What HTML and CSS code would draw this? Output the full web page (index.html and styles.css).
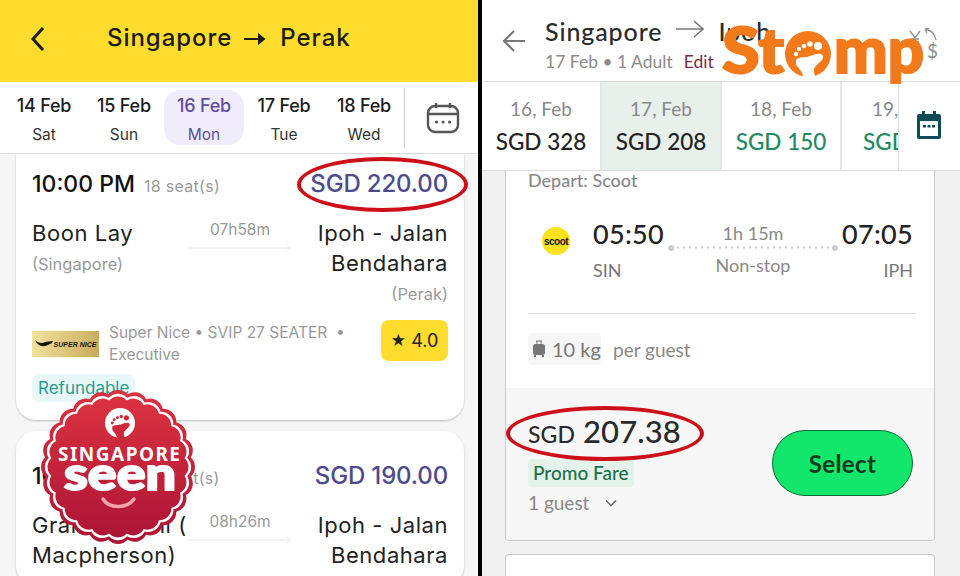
FILE: index.html
```html
<!DOCTYPE html>
<html lang="en">
<head>
<meta charset="utf-8">
<title>Singapore to Perak fares</title>
<link rel="stylesheet" href="styles.css">
</head>
<body>
<main class="page">
  <section class="left">
    <header class="l-head">
      <svg class="l-back" width="16" height="26" viewBox="0 0 16 26"><path d="M13 2 3 13l10 11" fill="none" stroke="#1d1a10" stroke-width="3"/></svg>
      <h1 class="l-title">Singapore<svg class="l-arrow" width="22" height="12" viewBox="0 0 22 12"><path d="M0 6h19M15 2l5 4-5 4z" fill="#1d1a10" stroke="#1d1a10" stroke-width="2"/></svg>Perak</h1>
    </header>
    <nav class="l-dates">
      <div class="l-day"><b>14 Feb</b><span>Sat</span></div>
      <div class="l-day"><b>15 Feb</b><span>Sun</span></div>
      <div class="l-day is-on"><b>16 Feb</b><span>Mon</span></div>
      <div class="l-day"><b>17 Feb</b><span>Tue</span></div>
      <div class="l-day"><b>18 Feb</b><span>Wed</span></div>
      <div class="l-cal">
        <svg width="34" height="34" viewBox="0 0 34 34" fill="none" stroke="#555" stroke-width="2.4"><rect x="2" y="5" width="30" height="26" rx="7"/><path d="M2 13h30M10 2v5M24 2v5"/><path d="M10.500 21h.1M17 21h.1M23.500 21h.1" stroke-width="3" stroke-linecap="round"/></svg>
      </div>
    </nav>
    <div class="l-list">
      <article class="l-card l-card-first">
        <div class="l-top">
          <div><span class="l-time">10:00 PM</span><span class="l-seats">18 seat(s)</span></div>
          <span class="l-price">SGD 220.00</span>
        </div>
        <div class="l-route">
          <div><p class="l-place">Boon Lay</p><p class="l-sub">(Singapore)</p></div>
          <div class="l-mid"><span>07h58m</span><svg width="104" height="8" viewBox="0 0 104 8" fill="none" stroke="#e8e8e8"><path d="M0 4h103M99 1l4 3-4 3"/></svg></div>
          <div class="l-end"><p class="l-place">Ipoh - Jalan Bendahara</p><p class="l-sub">(Perak)</p></div>
        </div>
        <div class="l-op">
          <div class="l-logo"><svg width="18" height="10" viewBox="0 0 18 10"><path d="M0 1c3 7 9 8 17 3l1-2-8 1C7 5 3 4 0 1z" fill="#1a1508"/></svg><i>SUPER NICE</i></div>
          <p class="l-optext">Super Nice • SVIP 27 SEATER &nbsp;• Executive</p>
          <div class="l-rate"><small>★</small> 4.0</div>
        </div>
        <span class="l-chip">Refundable</span>
      </article>
      <article class="l-card">
        <div class="l-top">
          <div><span class="l-time">10:30 PM</span><span class="l-seats">18 seat(s)</span></div>
          <span class="l-price">SGD 190.00</span>
        </div>
        <div class="l-route">
          <div><p class="l-place">Grantral Mall ( Macpherson)</p></div>
          <div class="l-mid"><span>08h26m</span><svg width="104" height="8" viewBox="0 0 104 8" fill="none" stroke="#e8e8e8"><path d="M0 4h103M99 1l4 3-4 3"/></svg></div>
          <div class="l-end"><p class="l-place">Ipoh - Jalan Bendahara</p></div>
        </div>
      </article>
    </div>
  </section>

  <section class="right">
    <header class="r-head">
      <svg width="24" height="22" viewBox="0 0 24 22" fill="none" stroke="#777" stroke-width="2.200"><path d="M23 11H2M12 1 2 11l10 10"/></svg>
      <div class="r-titles">
        <h2 class="r-title">Singapore<svg width="28" height="18" viewBox="0 0 28 18" fill="none" stroke="#777" stroke-width="1.600"><path d="M0 9h26M18 1l9 8-9 8"/></svg>Ipoh</h2>
        <p class="r-meta">17 Feb • 1 Adult<em>Edit</em></p>
      </div>
      <svg class="r-fx" width="30" height="36" viewBox="0 0 30 36" fill="none" stroke="#8a8f96" stroke-width="1.300"><path d="M2 3l5 7 5-7M7 10v6M3 11h8M3 14h8M17 1c6 1 10 5 11 11M17 1l4-1M17 1l2 4"/><text class="r-fx-t" x="19" y="30">$</text></svg>
    </header>
    <nav class="r-dates">
      <div class="r-day"><span>16, Feb</span><b>SGD 328</b></div>
      <div class="r-day is-on"><span>17, Feb</span><b>SGD 208</b></div>
      <div class="r-day is-low"><span>18, Feb</span><b>SGD 150</b></div>
      <div class="r-day is-low is-cut"><span>19, Feb</span><b>SGD 150</b></div>
      <div class="r-cal">
        <svg width="26" height="28" viewBox="0 0 26 28"><path d="M1 5a2 2 0 0 1 2-2h3V0h3v3h8V0h3v3h3a2 2 0 0 1 2 2v21a2 2 0 0 1-2 2H3a2 2 0 0 1-2-2z" fill="#0f4a58"/><rect x="4" y="10" width="18" height="15" fill="#fff"/><path d="M7 14h3v2.500H7zM11.500 14h3v2.500h-3zM16 14h3v2.500h-3z" fill="#0f4a58"/></svg>
      </div>
    </nav>
    <div class="r-list">
      <article class="r-card">
        <div class="r-main">
          <p class="r-carrier">Depart: Scoot</p>
          <div class="r-flight">
            <div class="r-scoot"><span>scoot</span></div>
            <div class="r-leg"><b>05:50</b><span>SIN</span></div>
            <div class="r-stop">
              <span>1h 15m</span>
              <i class="r-dots"></i>
              <span>Non-stop</span>
            </div>
            <div class="r-leg r-leg-end"><b>07:05</b><span>IPH</span></div>
          </div>
          <div class="r-bag">
            <span class="r-kg"><svg width="14" height="18" viewBox="0 0 14 18"><path d="M4 1h6M5 1v3M9 1v3" stroke="#777" fill="none"/><rect x="1" y="4" width="12" height="11" rx="2.500" fill="#777"/><path d="M3 15v2M11 15v2" stroke="#777" stroke-width="2"/></svg>10 kg</span>
            <span>per guest</span>
          </div>
        </div>
        <div class="r-foot">
          <div>
            <p class="r-price"><small>SGD</small> 207.38</p>
            <span class="r-promo">Promo Fare</span>
            <p class="r-guest">1 guest<svg width="12" height="8" viewBox="0 0 12 8" fill="none" stroke="#666" stroke-width="1.500"><path d="M1 1.500l5 5 5-5"/></svg></p>
          </div>
          <button class="r-select" type="button">Select</button>
        </div>
      </article>
      <article class="r-card r-next"></article>
    </div>
  </section>

  <div class="ring ring-left"></div>
  <div class="ring ring-right"></div>

  <svg class="stomp" width="206" height="62" viewBox="0 0 206 62">
    <text class="stomp-t" x="0" y="51" textLength="62" lengthAdjust="spacingAndGlyphs">St</text>
    <circle cx="86" cy="32" r="23" fill="#f37a1b"/>
    <g fill="#fff">
      <path d="M74 38C77 34 84 36 88 34 93 32 99 30 101 34 102 38 96 41 93 45 91 48 92 52 94 56L81 56C81 48 75 46 74 42Z"/>
      <circle cx="96" cy="24" r="4"/><circle cx="88" cy="22" r="2.700"/><circle cx="82" cy="24" r="2.300"/><circle cx="77" cy="27" r="2.200"/><circle cx="74" cy="32" r="2.200"/>
    </g>
    <text class="stomp-t" x="112" y="51" textLength="90" lengthAdjust="spacingAndGlyphs">mp</text>
  </svg>

  <svg class="badge" width="160" height="160" viewBox="-80 -80 160 160">
    <defs>
      <linearGradient id="red" x1="0" y1="0" x2="0" y2="1"><stop offset="0" stop-color="#dc3340"/><stop offset="1" stop-color="#ac1436"/></linearGradient>
      <clipPath id="wave">
        <circle r="66"/>
        <circle cy="-64" r="13"/><circle cy="-64" r="13" transform="rotate(15)"/><circle cy="-64" r="13" transform="rotate(30)"/><circle cy="-64" r="13" transform="rotate(45)"/><circle cy="-64" r="13" transform="rotate(60)"/><circle cy="-64" r="13" transform="rotate(75)"/><circle cy="-64" r="13" transform="rotate(90)"/><circle cy="-64" r="13" transform="rotate(105)"/><circle cy="-64" r="13" transform="rotate(120)"/><circle cy="-64" r="13" transform="rotate(135)"/><circle cy="-64" r="13" transform="rotate(150)"/><circle cy="-64" r="13" transform="rotate(165)"/><circle cy="-64" r="13" transform="rotate(180)"/><circle cy="-64" r="13" transform="rotate(195)"/><circle cy="-64" r="13" transform="rotate(210)"/><circle cy="-64" r="13" transform="rotate(225)"/><circle cy="-64" r="13" transform="rotate(240)"/><circle cy="-64" r="13" transform="rotate(255)"/><circle cy="-64" r="13" transform="rotate(270)"/><circle cy="-64" r="13" transform="rotate(285)"/><circle cy="-64" r="13" transform="rotate(300)"/><circle cy="-64" r="13" transform="rotate(315)"/><circle cy="-64" r="13" transform="rotate(330)"/><circle cy="-64" r="13" transform="rotate(345)"/>
      </clipPath>
    </defs>
    <rect x="-80" y="-80" width="160" height="160" fill="url(#red)" clip-path="url(#wave)"/>
    <g transform="scale(.95)"><rect x="-80" y="-80" width="160" height="160" fill="#fff" clip-path="url(#wave)"/></g>
    <g transform="scale(.915)"><rect x="-80" y="-80" width="160" height="160" fill="url(#red)" clip-path="url(#wave)"/></g>
    <circle cx="2" cy="-44" r="15" fill="#fff"/>
    <g transform="translate(2 -44) scale(.644) translate(-86 -32)" fill="#cf2a3b">
      <path d="M74 38C77 34 84 36 88 34 93 32 99 30 101 34 102 38 96 41 93 45 91 48 92 52 94 56L81 56C81 48 75 46 74 42Z"/>
      <circle cx="96" cy="24" r="4"/><circle cx="88" cy="22" r="2.700"/><circle cx="82" cy="24" r="2.300"/><circle cx="77" cy="27" r="2.200"/><circle cx="74" cy="32" r="2.200"/>
    </g>
    <text class="b-top" x="-60" y="-6" textLength="122">SINGAPORE</text>
    <text class="b-big" x="-54" y="23" textLength="112" lengthAdjust="spacingAndGlyphs">seen</text>
    <path d="M-15 32c6 10 24 10 31 0" fill="none" stroke="#f6a3aa" stroke-width="3.500" stroke-linecap="round"/>
  </svg>
</main>
</body>
</html>
```
FILE: styles.css
```css
* { box-sizing: border-box; margin: 0; padding: 0; }
html, body { width: 960px; height: 576px; overflow: hidden; background: #000; }
.page { position: relative; display: flex; gap: 4px; width: 960px; height: 576px; }

/* left phone */
.left { width: 478px; height: 576px; overflow: hidden; background: #f6f6f6; font-family: Inter, "Noto Sans", sans-serif; color: #1c1c1c; }
.l-head { position: relative; display: flex; align-items: center; height: 82px; padding: 0 0 7px 30px; background: #fedc2e; }
.l-back { flex: none; margin-top: 3px; }
.l-title { display: flex; align-items: center; margin-left: 61px; font-size: 24px; font-weight: 500; letter-spacing: .95px; color: #1d1a10; }
.l-arrow { margin: 3px 14px 0 12px; }
.l-dates { display: flex; align-items: center; height: 72px; padding-left: 4px; background: #fff; border-bottom: 1px solid #ddd; }
.l-day { display: flex; flex-direction: column; align-items: center; justify-content: center; gap: 9px; width: 80px; height: 55px; padding-top: 3px; border-radius: 16px; }
.l-day b { font-size: 18px; font-weight: 500; letter-spacing: -.2px; }
.l-day span { font-size: 15.500px; color: #333; }
.l-day.is-on { background: #f0ecfb; }
.l-day.is-on b, .l-day.is-on span { color: #5f4f9b; }
.l-cal { display: flex; align-items: center; justify-content: center; width: 74px; height: 60px; border-left: 1px solid #ccc; padding-left: 2px; }
.l-list { display: flex; flex-direction: column; gap: 11px; padding: 0 14px 0 16px; }
.l-card { padding: 30px 16px 16px; background: #fff; border-radius: 20px; box-shadow: 0 1px 2px #bbb; }
.l-card-first { height: 266px; padding-top: 15px; border-radius: 0 0 20px 20px; }
.l-top { display: flex; align-items: center; justify-content: space-between; }
.l-time { font-size: 23px; font-weight: 500; color: #111; }
.l-seats { margin-left: 9px; font-size: 16px; letter-spacing: .3px; color: #999; }
.l-price { font-size: 24px; font-weight: 500; color: #4f4a8c; letter-spacing: -.15px; }
.l-route { display: grid; grid-template-columns: 1fr 104px 1fr; margin-top: 20px; }
.l-place { font-size: 22px; line-height: 30px; letter-spacing: .55px; color: #222; }
.l-sub { margin-top: 1px; font-size: 16.500px; line-height: 30px; color: #999; }
.l-mid { display: flex; flex-direction: column; align-items: center; gap: 5px; padding-top: 2px; font-size: 15.500px; color: #999; }
.l-end { text-align: right; }
.l-op { display: flex; align-items: flex-start; margin-top: 11px; }
.l-logo { display: flex; flex: none; align-items: center; justify-content: center; gap: 1px; width: 67px; height: 26px; margin-top: 11px; background: linear-gradient(100deg, #f2e5a0, #c9a95a); }
.l-logo i { font: italic 900 7px "Liberation Sans", sans-serif; color: #1a1508; white-space: nowrap; }
.l-optext { width: 250px; margin: 2px 0 0 10px; font-size: 15.500px; line-height: 22px; color: #999; }
.l-rate { display: flex; align-items: center; justify-content: center; gap: 5px; width: 67px; height: 41px; margin-left: auto; border-radius: 8px; background: #fedc2e; font-size: 18px; color: #222; }
.l-rate small { font-size: 15px; }
.l-chip { display: inline-block; margin-top: 8px; padding: 3px 6px; border-radius: 8px; background: #e8f7f8; font-size: 17px; line-height: 22px; color: #2a9d8f; }

/* right phone */
.right { width: 478px; height: 576px; overflow: hidden; background: #f1f1f1; font-family: Lato, "Noto Sans", sans-serif; color: #222; }
.r-head { position: relative; display: flex; align-items: center; height: 82px; padding-left: 20px; background: #fff; border-bottom: 1px solid #ddd; }
.r-titles { margin: 6px 0 0 19px; }
.r-title { display: flex; align-items: center; font-size: 25px; font-weight: 500; color: #2a2a2a; letter-spacing: .9px; }
.r-title svg { margin: -4px 14px 0 14px; }
.r-meta { margin-top: 5px; font-size: 17.500px; color: #8a8a8a; }
.r-meta em { margin-left: 11px; font-style: normal; color: #7a2e3c; }
.r-fx { position: absolute; top: 28px; right: 22px; }
.r-fx-t { font: 400 19px Lato, sans-serif; fill: #8a8f96; stroke: none; }
.r-dates { display: flex; height: 89px; background: #fff; border-bottom: 1px solid #ddd; }
.r-day { display: flex; flex: none; flex-direction: column; align-items: center; gap: 8px; width: 120px; padding-top: 15px; border-right: 2px solid #e6e6e6; white-space: nowrap; }
.r-day span { font-size: 19px; color: #888; }
.r-day b { font-size: 22.500px; font-weight: 500; color: #222; }
.r-day.is-on { background: #e8f0ec; }
.r-day.is-low b { color: #1f8a5f; }
.r-day.is-cut { width: 56px; overflow: hidden; align-items: flex-start; padding-left: 21px; border-right: 0; }
.r-day.is-cut span { margin-left: 9px; }
.r-cal { display: flex; flex: 1; align-items: center; justify-content: center; padding: 0 2px 2px 0; border-left: 1px solid #ddd; }
.r-list { display: flex; flex-direction: column; gap: 13px; padding: 0 25px 0 23px; }
.r-card { background: #fff; border: 1px solid #ccc; border-top: 0; border-radius: 0 0 4px 4px; overflow: hidden; }
.r-main { height: 217px; padding: 0 18px 0 22px; }
.r-carrier { font-size: 18px; font-weight: 500; line-height: 18px; color: #888; }
.r-flight { display: flex; align-items: flex-start; margin-top: 29px; }
.r-scoot { display: flex; flex: none; align-items: center; justify-content: center; width: 28px; height: 28px; margin: 9px 23px 0 14px; border-radius: 50%; background: #fbe21d; }
.r-scoot span { font: 700 10px "Liberation Sans", sans-serif; letter-spacing: -.5px; color: #111; }
.r-leg { display: flex; flex-direction: column; gap: 9px; width: 76px; }
.r-leg b { font-size: 27px; font-weight: 500; line-height: 32px; color: #222; letter-spacing: .3px; }
.r-leg span { font-size: 18px; line-height: 22px; color: #777; }
.r-leg-end { align-items: flex-end; }
.r-stop { display: flex; flex-direction: column; align-items: center; width: 168px; font-size: 18px; line-height: 22px; color: #888; }
.r-stop span:first-child { margin-top: 4px; }
.r-dots { display: block; position: relative; width: 168px; height: 5px; margin: 1px 0 4px; background: radial-gradient(circle, #ccc 1px, transparent 1.200px) 0 0 / 6px 5px repeat-x; }
.r-dots::before, .r-dots::after { content: ""; position: absolute; top: -.5px; width: 6px; height: 6px; border-radius: 50%; background: #ccc; }
.r-dots::before { left: -1px; }
.r-dots::after { right: -1px; }
.r-bag { display: flex; align-items: center; gap: 12px; margin-top: 32px; padding-top: 19px; border-top: 1px solid #ddd; font-size: 19px; color: #888; }
.r-kg { display: flex; align-items: center; gap: 6px; width: 73px; height: 32px; padding-left: 4px; border-radius: 4px; background: #f6f6f6; font-size: 20px; color: #777; }
.r-foot { display: flex; align-items: flex-start; justify-content: space-between; height: 152px; padding: 23px 21px 0 22px; background: #f7f7f7; }
.r-price { font-size: 31px; font-weight: 500; line-height: 40px; color: #2a2a2a; letter-spacing: .1px; }
.r-price small { font-size: 23px; }
.r-promo { display: inline-block; margin-top: 5px; padding: 2px 5px; border-radius: 4px; background: #e3f3ea; font-size: 19px; font-weight: 500; line-height: 24px; color: #1f6f4a; }
.r-guest { display: flex; align-items: center; gap: 16px; margin-top: 4px; font-size: 19px; color: #888; }
.r-select { width: 141px; height: 66px; margin-top: 19px; border: 1px solid #0d6b3a; border-radius: 33px; background: #12e66b; font: 700 24px Lato, sans-serif; letter-spacing: .4px; color: #0c3a1f; }
.r-next { height: 60px; border-top: 1px solid #ccc; border-radius: 4px 4px 0 0; }

/* annotations over the screenshots */
.ring { position: absolute; border: 4px solid #cc0f18; border-radius: 50%; }
.ring-left { left: 297px; top: 157px; width: 171px; height: 55px; }
.ring-right { left: 506px; top: 406px; width: 198px; height: 55px; }
.stomp { position: absolute; left: 722px; top: 22px; }
.stomp-t { font: 900 62px Lato, sans-serif; fill: #f37a1b; stroke: #f37a1b; stroke-width: 2px; }
.badge { position: absolute; left: 38px; top: 387px; }
.b-top { font: 700 19px "Noto Sans", sans-serif; fill: #fff; }
.b-big { font: 900 46px Lato, sans-serif; fill: #fff; stroke: #fff; stroke-width: 2px; }
```
